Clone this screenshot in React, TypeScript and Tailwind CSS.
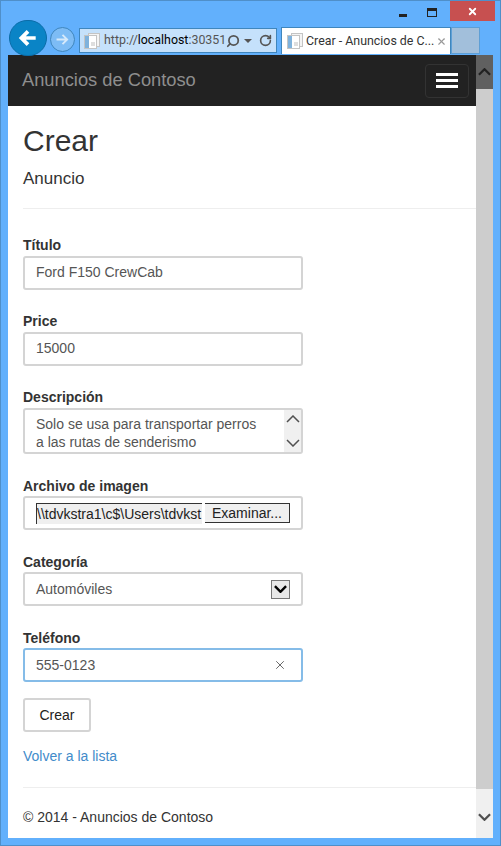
import { RotateCw, Search, X } from "lucide-react";
import type { ReactNode } from "react";

function PageIcon({ className }: { className: string }) {
  return (
    <svg viewBox="0 0 16 16" className={className}>
      <rect x="4.5" y="0.5" width="11" height="13" fill="#f4f4f4" stroke="#c4c4c4" />
      <rect x="0.5" y="2.5" width="12" height="13" fill="#ffffff" stroke="#c4c4c4" />
      <rect x="1" y="3" width="4" height="12" fill="#7fb2dc" />
      <path d="M7 10h4M7 12h4" stroke="#bdbdbd" />
    </svg>
  );
}

// scrollbar / select arrows are wider and flatter than the lucide chevrons
function Arrow({ up, className, width }: { up?: boolean; className: string; width: number }) {
  return (
    <svg viewBox="0 0 14 8" className={className} fill="none" stroke="currentColor" strokeWidth={width}>
      <path d={up ? "M1 7l6-6 6 6" : "M1 1l6 6 6-6"} />
    </svg>
  );
}

function Field({ label, low, children }: { label: string; low?: boolean; children: ReactNode }) {
  return (
    <div className="mb-[21px] w-[280px]">
      <div className={`h-[21px] text-[14px] leading-[20px] font-bold text-[#333] ${low ? "pt-px" : ""}`}>{label}</div>
      {children}
    </div>
  );
}

function Box({ value, children, className }: { value?: string; children?: ReactNode; className?: string }) {
  return (
    <div className={`flex h-[34px] items-center rounded-[3px] border-2 pl-[11px] text-[14px] text-[#555] ${className ?? "border-[#d4d4d4] pb-px"}`}>
      {value}
      {children}
    </div>
  );
}

export default function App() {
  return (
    <div className="flex h-[846px] w-[501px] flex-col overflow-hidden border border-[#4f8fc9] bg-[#62b0fc] font-['Liberation_Sans',Arial,sans-serif]">
      {/* window chrome */}
      <div className="h-[54px] shrink-0">
        <div className="flex h-[20px] items-start justify-end pr-[5px]">
          <div className="mt-[13px] mr-[20px] h-[3px] w-[8px] bg-[#222]" />
          <div className="mt-[7px] mr-[13px] h-[9px] w-[10px] border border-t-[3px] border-[#222]" />
          <div className="flex h-[20px] w-[45px] items-center justify-center bg-[#c75050]">
            <X className="h-[11px] w-[11px] text-white" strokeWidth={4} />
          </div>
        </div>
        <div className="flex h-[33px] items-end pl-[8px]">
          <div className="relative z-10 mb-[-2px] flex h-[36px] w-[38px] shrink-0 items-center justify-center rounded-full border border-[#0a6ca8] bg-[#0a84c6]">
            <svg viewBox="0 0 20 20" className="h-[22px] w-[22px]">
              <path d="M17 10H4M10 4l-6 6 6 6" fill="none" stroke="#fff" strokeWidth="3.4" />
            </svg>
          </div>
          <div className="mb-[2px] ml-[3px] flex h-[25px] w-[25px] shrink-0 items-center justify-center rounded-full border border-[#3f86bd] bg-[#7dbcf5]">
            <svg viewBox="0 0 20 20" className="h-[17px] w-[17px]">
              <path d="M3 10h12M10 4.5l5.5 5.5-5.5 5.5" fill="none" stroke="#d6e9fa" strokeWidth="2.2" />
            </svg>
          </div>
          <div className="mb-[1px] ml-[4px] flex h-[25px] w-[198px] shrink-0 items-center border border-[#3f86bd] bg-[#c5e1fb] pl-[4px] font-['Roboto',sans-serif] text-[12.4px] text-[#555]">
            <PageIcon className="h-[16px] w-[16px] shrink-0" />
            <span className="ml-[4px] w-[117px] shrink-0 whitespace-nowrap">
              http://<span className="text-black">localhost</span>:30351
            </span>
            <Search className="ml-[5px] h-[14px] w-[14px] shrink-0 -scale-x-100 text-[#555]" strokeWidth={3} />
            <div className="ml-[4px] h-0 w-0 shrink-0 border-x-[4px] border-t-[4px] border-x-transparent border-t-[#555]" />
            <RotateCw className="ml-[7px] h-[13px] w-[13px] shrink-0 text-[#555]" strokeWidth={3} />
          </div>
          <div className="ml-[4px] flex h-[27px] w-[170px] shrink-0 items-center border border-b-0 border-[#3f86bd] bg-white pl-[5px] font-['Roboto',sans-serif] text-[12.4px] whitespace-nowrap text-[#333]">
            <PageIcon className="h-[16px] w-[16px] shrink-0" />
            <span className="ml-[3px] w-[125px] shrink-0">Crear - Anuncios de C...</span>
            <X className="ml-[5px] h-[11px] w-[11px] shrink-0 text-[#999]" strokeWidth={2.5} />
          </div>
          <div className="h-[27px] w-[29px] shrink-0 border border-[#5e9fd6] bg-[#a2bfdb]" />
        </div>
      </div>

      {/* browser viewport */}
      <div className="ml-[7px] flex h-[783px] w-[485px] shrink-0 bg-white">
        <div className="flex w-[468px] flex-col">
          <div className="flex h-[51px] shrink-0 items-center justify-between bg-[#222] pr-[7px] pl-[14px]">
            <span className="pb-[2px] text-[18.3px] text-[#8e8e8e]">Anuncios de Contoso</span>
            <div className="flex h-[34px] w-[44px] flex-col items-center justify-center gap-[3px] rounded-[4px] border border-[#333]">
              <div className="h-[3px] w-[22px] bg-white" />
              <div className="h-[3px] w-[22px] bg-white" />
              <div className="h-[3px] w-[22px] bg-white" />
            </div>
          </div>

          <div className="flex flex-1 flex-col pl-[15px]">
            <h1 className="mt-[17px] text-[30px] leading-[36px] text-[#333]">Crear</h1>
            <h4 className="mt-[10px] text-[17px] leading-[20px] text-[#333]">Anuncio</h4>
            <div className="mt-[19px] mb-[26px] h-px bg-[#eee]" />

            <Field label="Título">
              <Box value="Ford F150 CrewCab" />
            </Field>
            <Field label="Price">
              <Box value="15000" />
            </Field>
            <Field label="Descripción">
              <div className="flex h-[46px] rounded-[3px] border-2 border-[#d4d4d4] text-[14px] leading-[18px] text-[#555]">
                <div className="flex-1 pt-[5px] pl-[11px]">
                  Solo se usa para transportar perros
                  <br />a las rutas de senderismo
                </div>
                <div className="flex w-[17px] flex-col items-center justify-between bg-[#f0f0f0] py-[5px]">
                  <Arrow up className="h-[8px] w-[14px] text-[#505050]" width={1.5} />
                  <Arrow className="h-[8px] w-[14px] text-[#505050]" width={1.5} />
                </div>
              </div>
            </Field>
            <Field label="Archivo de imagen" low>
              <Box className="border-[#d4d4d4]">
                <div className="h-[21px] w-[166px] shrink-0 overflow-hidden border-t border-l border-[#333] bg-[#efefef] text-[14px] leading-[21px] whitespace-nowrap text-[#222]">
                  \\tdvkstra1\c$\Users\tdvkst
                </div>
                <div className="ml-[3px] flex h-[20px] w-[85px] shrink-0 items-center justify-center border-t border-r border-b border-[#333] bg-[#f0f0f0] text-[14px] text-[#222]">
                  Examinar...
                </div>
              </Box>
            </Field>
            <Field label="Categoría" low>
              <Box className="justify-between border-[#d4d4d4] pr-[11px]">
                <span className="pt-px">Automóviles</span>
                <div className="flex h-[19px] w-[19px] items-center justify-center border border-[#777] bg-[#e8e8e8]">
                  <Arrow className="h-[8px] w-[13px] text-black" width={2.6} />
                </div>
              </Box>
            </Field>
            <div className="w-[280px]">
              <div className="h-[21px] pt-px text-[14px] leading-[20px] font-bold text-[#333]">Teléfono</div>
              <Box value="555-0123" className="justify-between border-[#85bce8] pr-[14px]">
                <X className="h-[14px] w-[14px] text-[#555]" strokeWidth={1.5} />
              </Box>
            </div>

            <button className="mt-[16px] h-[34px] w-[68px] rounded-[3px] border-2 border-[#d4d4d4] text-[14px] text-[#222]">
              Crear
            </button>
            <a className="mt-[14px] text-[14px] leading-[20px] text-[#428bca]">Volver a la lista</a>
            <div className="mt-[21px] h-px bg-[#eee]" />
            <p className="mt-[19px] text-[14px] leading-[20px] text-[#333]">© 2014 - Anuncios de Contoso</p>
          </div>
        </div>

        {/* page scrollbar */}
        <div className="flex w-[17px] flex-col bg-[#f0f0f0]">
          <div className="flex h-[34px] shrink-0 items-center justify-center bg-[#606060]">
            <Arrow up className="h-[8px] w-[13px] text-[#222]" width={2.4} />
          </div>
          <div className="h-[700px] shrink-0 bg-[#cdcdcd]" />
          <div className="flex flex-1 items-end justify-center pb-[17px]">
            <Arrow className="h-[8px] w-[13px] text-[#505050]" width={2.4} />
          </div>
        </div>
      </div>
    </div>
  );
}
